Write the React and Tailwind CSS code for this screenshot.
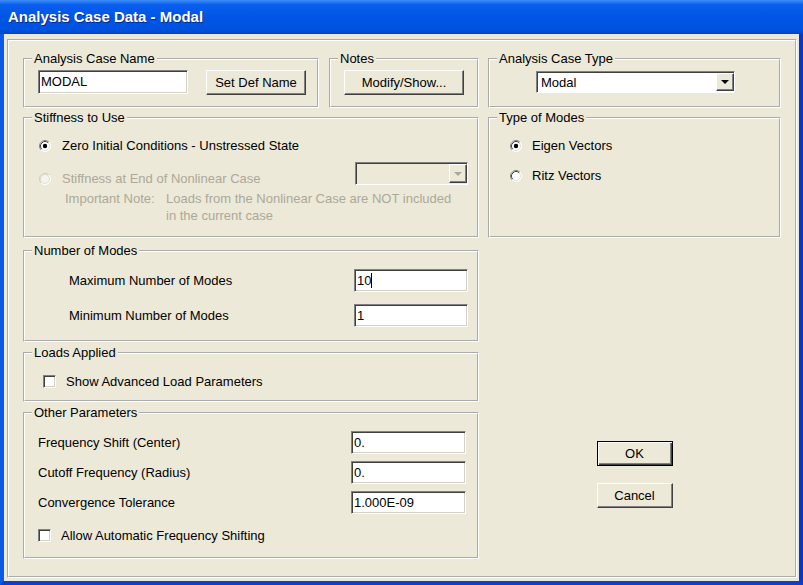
import React from 'react'

const Group = ({ title, className = '', children }) => (
  <fieldset className={`border-2 [border-style:groove] border-white ${className}`}>
    <legend className="ml-[7px] px-[2px] leading-[16px]">{title}</legend>
    {children}
  </fieldset>
)

const Radio = ({ checked, disabled }) => (
  <svg width="12" height="12" viewBox="0 0 12 12" className="shrink-0">
    <circle cx="6" cy="6" r="5.5" fill={disabled ? '#f4f3ee' : '#fff'} />
    <path d="M2.11 9.89A5.5 5.5 0 0 1 9.89 2.11" fill="none" stroke={disabled ? '#cfccbd' : '#808080'} />
    <path d="M2.82 9.18A4.5 4.5 0 0 1 9.18 2.82" fill="none" stroke={disabled ? '#dedbcc' : '#404040'} />
    <path d="M9.89 2.11A5.5 5.5 0 0 1 2.11 9.89" fill="none" stroke="#ffffff" />
    <path d="M9.18 2.82A4.5 4.5 0 0 1 2.82 9.18" fill="none" stroke="#e4e1d4" />
    {checked && <circle cx="6" cy="6" r="2.2" fill="#000" />}
  </svg>
)

const Check = () => (
  <div className="w-[13px] h-[13px] shrink-0 bg-white border border-t-[#808080] border-l-[#808080] border-r-white border-b-white shadow-[inset_1px_1px_0_#404040,inset_-1px_-1px_0_#d4d0c8]" />
)

const Field = ({ value, className = '', cursor }) => (
  <div className={`h-[23px] shrink-0 bg-white border border-t-[#808080] border-l-[#808080] border-r-white border-b-white shadow-[inset_1px_1px_0_#404040,inset_-1px_-1px_0_#d4d0c8] pl-[2px] flex items-center ${className}`}>
    <span>{value}</span>
    {cursor && <span className="w-px h-[15px] bg-black" />}
  </div>
)

const Btn = ({ children, className = '', def }) => (
  <div
    className={`h-[25px] shrink-0 flex items-center justify-center bg-[#ece9d8] border ${
      def
        ? 'border-black shadow-[inset_1px_1px_0_#fff,inset_-1px_-1px_0_#404040,inset_-2px_-2px_0_#808080]'
        : 'border-t-white border-l-white border-r-[#404040] border-b-[#404040] shadow-[inset_-1px_-1px_0_#808080]'
    } ${className}`}
  >
    {children}
  </div>
)

const Arrow = ({ color }) => (
  <svg width="8" height="4" viewBox="0 0 8 4">
    <path d="M0 0h8L4 4z" fill={color} />
  </svg>
)

const Select = ({ value, className = '', disabled }) => (
  <div className={`shrink-0 flex border border-t-[#808080] border-l-[#808080] border-r-white border-b-white shadow-[inset_1px_1px_0_#404040] ${disabled ? 'bg-[#ece9d8]' : 'bg-white'} ${className}`}>
    <div className="flex-1 pl-[4px] pt-px flex items-center">{value}</div>
    <div className="w-[18px] my-px flex items-center justify-center bg-[#ece9d8] border border-t-white border-l-white border-r-[#404040] border-b-[#404040] shadow-[inset_-1px_-1px_0_#808080]">
      <Arrow color={disabled ? '#aca899' : '#000'} />
    </div>
  </div>
)

export default function App() {
  return (
    <div className="w-[803px] h-[585px] flex flex-col bg-[#ece9d8] text-[13px] text-black font-['Liberation_Sans',Arial,sans-serif] overflow-hidden">
      {/* title bar */}
      <div className="h-[34px] shrink-0 flex items-center pl-[8px] pt-[1px] text-white font-bold text-[15px] bg-[linear-gradient(to_bottom,#3d8ef8_0%,#0a5eee_14%,#0055e5_50%,#0052e0_88%,#0044c4_100%)] [text-shadow:1px_1px_0_#0a2a8a]">
        Analysis Case Data - Modal
      </div>

      {/* window body */}
      <div className="flex-1 flex border-l-4 border-r-4 border-b-4 border-l-[#0a5ae6] border-r-[#0936c8] border-b-[#0a3fd0] pt-[5px] pl-[3px] pr-[2px] pb-[3px]">
        <div className="flex-1 flex gap-[9px] border-2 [border-style:groove] border-white pl-[14px] pt-[10px]">

          {/* left column */}
          <div className="w-[456px] flex flex-col">
            <div className="flex gap-[10px]">
              <Group title="Analysis Case Name" className="w-[296px] h-[57px]">
                <div className="flex items-start pt-[3px] pl-[13px]">
                  <Field value="MODAL" className="w-[150px] h-[24px]" />
                  <Btn className="w-[100px] ml-[18px]">Set Def Name</Btn>
                </div>
              </Group>
              <Group title="Notes" className="w-[150px] h-[57px]">
                <div className="flex justify-center pt-[3px]">
                  <Btn className="w-[120px]">Modify/Show...</Btn>
                </div>
              </Group>
            </div>

            <Group title="Stiffness to Use" className="mt-[2px] h-[128px]">
              <div className="pt-[12px]">
                <div className="flex items-center h-[16px] pl-[14px] gap-[11px]">
                  <Radio checked />
                  <span>Zero Initial Conditions - Unstressed State</span>
                </div>
                <div className="mt-[8px] flex justify-between pr-[9px]">
                  <div className="mt-[9px] flex items-center h-[16px] pl-[14px] gap-[11px] text-[#aca899]">
                    <Radio disabled />
                    <span>Stiffness at End of Nonlinear Case</span>
                  </div>
                  <Select disabled value="" className="w-[113px] h-[23px]" />
                </div>
                <div className="mt-[3px] flex text-[#aca899] leading-[17px]">
                  <span className="w-[141px] pl-[40px]">Important Note:</span>
                  <div>
                    <div>Loads from the Nonlinear Case are NOT included</div>
                    <div>in the current case</div>
                  </div>
                </div>
              </div>
            </Group>

            <Group title="Number of Modes" className="mt-[5px] h-[99px]">
              <div className="pt-[10px] flex flex-col gap-[12px] pl-[44px] pr-[9px]">
                <div className="flex items-center justify-between">
                  <span>Maximum Number of Modes</span>
                  <Field value="10" cursor className="w-[114px]" />
                </div>
                <div className="flex items-center justify-between">
                  <span>Minimum Number of Modes</span>
                  <Field value="1" className="w-[114px]" />
                </div>
              </div>
            </Group>

            <Group title="Loads Applied" className="mt-[3px] h-[57px]">
              <div className="pt-[11px] pl-[18px] flex items-center gap-[10px]">
                <Check />
                <span>Show Advanced Load Parameters</span>
              </div>
            </Group>

            <Group title="Other Parameters" className="mt-[3px] h-[154px]">
              <div className="pt-[10px] flex flex-col gap-[7px] pl-[13px] pr-[11px]">
                <div className="flex items-center justify-between">
                  <span>Frequency Shift (Center)</span>
                  <Field value="0." className="w-[115px]" />
                </div>
                <div className="flex items-center justify-between">
                  <span>Cutoff Frequency (Radius)</span>
                  <Field value="0." className="w-[115px]" />
                </div>
                <div className="flex items-center justify-between">
                  <span>Convergence Tolerance</span>
                  <Field value="1.000E-09" className="w-[115px]" />
                </div>
                <div className="mt-[5px] flex items-center gap-[10px]">
                  <Check />
                  <span>Allow Automatic Frequency Shifting</span>
                </div>
              </div>
            </Group>
          </div>

          {/* right column */}
          <div className="w-[293px] flex flex-col">
            <Group title="Analysis Case Type" className="h-[57px]">
              <div className="pt-[4px] pl-[46px]">
                <Select value="Modal" className="w-[199px] h-[22px]" />
              </div>
            </Group>

            <Group title="Type of Modes" className="mt-[2px] h-[128px]">
              <div className="pt-[12px] pl-[20px] flex flex-col gap-[14px]">
                <div className="flex items-center h-[16px] gap-[10px]">
                  <Radio checked />
                  <span>Eigen Vectors</span>
                </div>
                <div className="flex items-center h-[16px] gap-[10px]">
                  <Radio />
                  <span>Ritz Vectors</span>
                </div>
              </div>
            </Group>

            <div className="mt-[203px] flex flex-col items-center gap-[17px]">
              <Btn def className="w-[76px]">OK</Btn>
              <Btn className="w-[76px]">Cancel</Btn>
            </div>
          </div>

        </div>
      </div>
    </div>
  )
}
